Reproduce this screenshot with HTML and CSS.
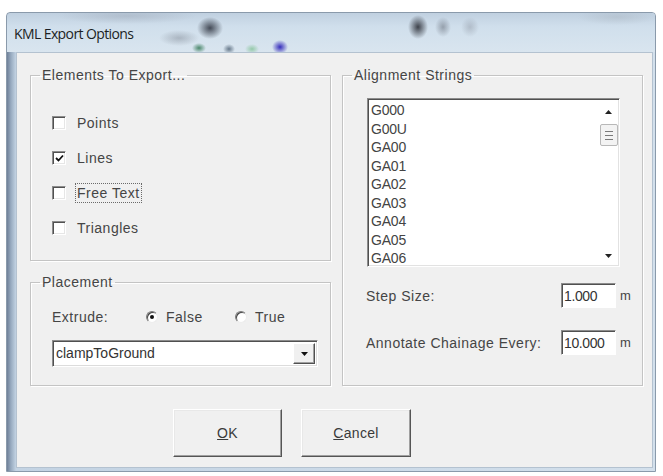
FILE: index.html
```html
<!DOCTYPE html>
<html>
<head>
<meta charset="utf-8">
<title>KML Export Options</title>
<link rel="stylesheet" href="styles.css">
</head>
<body>
<div class="window">
  <div class="titlebar"><span class="title">KML Export Options</span></div>
  <div class="frame">
    <div class="client">
      <div class="groups">
        <div class="col-left">
          <fieldset class="group elements">
            <legend>Elements To Export...</legend>
            <div class="group-body check-list">
              <div class="check"><span class="box"></span><span class="lbl">Points</span></div>
              <div class="check"><span class="box"><svg viewBox="0 0 9 9" width="9" height="9"><path d="M1 4 L3.5 6.5 L8 1.5" fill="none" stroke="#111" stroke-width="1.8"/></svg></span><span class="lbl">Lines</span></div>
              <div class="check"><span class="box"></span><span class="lbl focus">Free Text</span></div>
              <div class="check"><span class="box"></span><span class="lbl">Triangles</span></div>
            </div>
          </fieldset>
          <fieldset class="group placement">
            <legend>Placement</legend>
            <div class="group-body">
              <div class="extrude-row">
                <span class="extrude-label">Extrude:</span>
                <span class="radio-item"><span class="radio on"></span><span class="lbl">False</span></span>
                <span class="radio-item"><span class="radio"></span><span class="lbl">True</span></span>
              </div>
              <div class="combo">
                <span class="combo-text">clampToGround</span>
                <span class="combo-btn"><svg viewBox="0 0 7 4" width="7" height="4"><path d="M0 0 H7 L3.5 4 Z" fill="#111"/></svg></span>
              </div>
            </div>
          </fieldset>
        </div>
        <fieldset class="group alignment">
          <legend>Alignment Strings</legend>
          <div class="group-body">
            <div class="listbox">
              <ul class="items">
                <li>G000</li>
                <li>G00U</li>
                <li>GA00</li>
                <li>GA01</li>
                <li>GA02</li>
                <li>GA03</li>
                <li>GA04</li>
                <li>GA05</li>
                <li>GA06</li>
              </ul>
              <div class="vscroll">
                <svg class="arrow" viewBox="0 0 7 4" width="7" height="4"><path d="M0 4 H7 L3.5 0 Z" fill="#222"/></svg>
                <div class="thumb"><i></i><i></i><i></i></div>
                <div class="track"></div>
                <svg class="arrow" viewBox="0 0 7 4" width="7" height="4"><path d="M0 0 H7 L3.5 4 Z" fill="#222"/></svg>
              </div>
            </div>
            <div class="field-row">
              <span class="field-label">Step Size:</span>
              <span class="field"><span class="input">1.000</span><span class="unit">m</span></span>
            </div>
            <div class="field-row">
              <span class="field-label">Annotate Chainage Every:</span>
              <span class="field"><span class="input">10.000</span><span class="unit">m</span></span>
            </div>
          </div>
        </fieldset>
      </div>
      <div class="buttons">
        <button class="btn ok"><u>O</u>K</button>
        <button class="btn cancel"><u>C</u>ancel</button>
      </div>
    </div>
  </div>
</div>
</body>
</html>
```

FILE: styles.css
```css
* { box-sizing: border-box; }

html, body {
  margin: 0;
  padding: 0;
  background: #ffffff;
}

body {
  width: 663px;
  height: 476px;
  overflow: hidden;
  font-family: "Liberation Sans", Arial, sans-serif;
  font-size: 14px;
  color: #454545;
}

/* Aero-style window frame */
.window {
  margin: 12px 0 0 6px;
  width: 650px;
  height: 460px;
  display: flex;
  flex-direction: column;
  border-radius: 4px 4px 0 0;
  border: 1px solid #8a9aab;
  background:
    linear-gradient(90deg, #6f8098 0px, #98abc0 4px, #c3d3e3 9px, #d3e0ec 100%);
  overflow: hidden;
}

.titlebar {
  height: 39px;
  flex: none;
  padding: 12px 0 0 7px;
  background:
    radial-gradient(ellipse 13px 11px at 203px 15px, rgba(52, 58, 70, 0.9), rgba(52, 58, 70, 0) 100%),
    radial-gradient(ellipse 20px 8px at 172px 25px, rgba(120, 128, 140, 0.45), rgba(120, 128, 140, 0) 100%),
    radial-gradient(ellipse 10px 12px at 411px 14px, rgba(45, 48, 56, 0.9), rgba(45, 48, 56, 0) 100%),
    radial-gradient(ellipse 8px 10px at 436px 14px, rgba(110, 118, 130, 0.6), rgba(110, 118, 130, 0) 100%),
    radial-gradient(ellipse 9px 10px at 463px 14px, rgba(140, 148, 160, 0.45), rgba(140, 148, 160, 0) 100%),
    radial-gradient(ellipse 7px 5px at 192px 35px, rgba(50, 120, 85, 0.85), rgba(50, 120, 85, 0) 100%),
    radial-gradient(ellipse 6px 5px at 222px 36px, rgba(65, 85, 105, 0.75), rgba(65, 85, 105, 0) 100%),
    radial-gradient(ellipse 7px 5px at 245px 36px, rgba(120, 190, 140, 0.7), rgba(120, 190, 140, 0) 100%),
    radial-gradient(ellipse 8px 7px at 273px 34px, rgba(45, 35, 185, 0.95), rgba(45, 35, 185, 0) 100%),
    radial-gradient(ellipse 70px 8px at 120px 3px, rgba(150, 160, 175, 0.4), rgba(150, 160, 175, 0) 100%),
    radial-gradient(ellipse 40px 8px at 610px 4px, rgba(160, 170, 180, 0.35), rgba(160, 170, 180, 0) 100%),
    linear-gradient(180deg, #c0d0e0 0%, #d0dfec 35%, #d9e5ef 100%);
}

.title {
  font-family: "Open Sans", "Noto Sans", sans-serif;
  font-size: 14px;
  letter-spacing: -0.6px;
  line-height: 18px;
  color: #1c1f24;
}

.frame {
  flex: 1;
  padding: 0 2px 3px 9px;
  display: flex;
}

.client {
  flex: 1;
  background: #f0f0f0;
  border: 1px solid #b4c2d0;
  padding: 14px 0 0 13px;
  display: flex;
  flex-direction: column;
}

.groups {
  display: flex;
  gap: 11px;
}

.col-left {
  display: flex;
  flex-direction: column;
  gap: 13px;
}

/* etched group boxes */
.group {
  margin: 0;
  padding: 0;
  width: 301px;
  border: 1px solid #c4c4c4;
  box-shadow: inset 1px 1px 0 #ffffff, 1px 1px 0 #ffffff;
  min-width: 0;
}

.group legend {
  margin-left: 9px;
  padding: 0 2px;
  line-height: 16px;
  font-size: 14px;
  letter-spacing: 0.5px;
  color: #454545;
}

.group-body {
  display: flex;
  flex-direction: column;
  letter-spacing: 0.5px;
}

/* Elements To Export */
.check-list {
  padding: 30px 0 22px 21px;
  gap: 15px;
}

.check {
  display: flex;
  align-items: center;
  height: 20px;
}

.box {
  width: 14px;
  height: 14px;
  flex: none;
  background: #ffffff;
  border-top: 1px solid #8c8c8c;
  border-left: 1px solid #8c8c8c;
  border-right: 1px solid #ffffff;
  border-bottom: 1px solid #ffffff;
  box-shadow: inset 1px 1px 0 #505050, inset -1px -1px 0 #e6e6e6;
  display: flex;
  align-items: center;
  justify-content: center;
  margin-right: 9px;
}

.box svg { display: block; margin: 1px 0 0 1px; }

.lbl {
  line-height: 18px;
  padding: 0 1px;
  border: 1px solid transparent;
}

.lbl.focus {
  border: 1px dotted #6a6a6a;
}

/* Placement */
.placement .group-body {
  padding: 17px 0 18px 21px;
}

.extrude-row {
  display: flex;
  align-items: center;
  height: 20px;
}

.extrude-label {
  width: 94px;
}

.radio-item {
  display: flex;
  align-items: center;
  width: 89px;
}

.radio {
  width: 12px;
  height: 12px;
  flex: none;
  border-radius: 50%;
  background: #ffffff;
  border: 1px solid;
  border-color: #7a7a7a #ececec #ececec #7a7a7a;
  box-shadow: inset 1px 1px 0 #454545;
  margin-right: 6px;
  display: flex;
  align-items: center;
  justify-content: center;
}

.radio.on::after {
  content: "";
  width: 4px;
  height: 4px;
  border-radius: 50%;
  background: #111111;
}

.combo {
  margin-top: 13px;
  width: 266px;
  height: 27px;
  display: flex;
  align-items: stretch;
  background: #ffffff;
  border-top: 1px solid #8c8c8c;
  border-left: 1px solid #8c8c8c;
  border-right: 1px solid #ffffff;
  border-bottom: 1px solid #ffffff;
  box-shadow: inset 1px 1px 0 #505050, inset -1px -1px 0 #dcdcdc;
}

.combo-text {
  flex: 1;
  padding: 4px 0 0 3px;
  color: #333333;
  letter-spacing: 0;
}

.combo-btn {
  width: 22px;
  margin: 2px 2px 2px 0;
  background: #f0f0f0;
  border-top: 1px solid #ffffff;
  border-left: 1px solid #ffffff;
  border-right: 1px solid #505050;
  border-bottom: 1px solid #505050;
  box-shadow: inset -1px -1px 0 #a0a0a0;
  display: flex;
  align-items: center;
  justify-content: center;
}

.combo-btn svg { display: block; }

/* Alignment Strings */
.alignment .group-body {
  padding: 15px 0 30px 24px;
}

.listbox {
  width: 253px;
  height: 169px;
  display: flex;
  background: #ffffff;
  border-top: 1px solid #8c8c8c;
  border-left: 1px solid #8c8c8c;
  border-right: 1px solid #ffffff;
  border-bottom: 1px solid #ffffff;
  box-shadow: inset 1px 1px 0 #505050, inset -1px -1px 0 #e2e2e2;
}

.items {
  list-style: none;
  margin: 0;
  padding: 2px 0 0 3px;
  flex: 1;
}

.items li {
  height: 18.5px;
  line-height: 18.5px;
  color: #444444;
  letter-spacing: -0.2px;
}

.vscroll {
  width: 21px;
  display: flex;
  flex-direction: column;
  align-items: center;
  padding: 11px 0 8px;
}

.vscroll .arrow { display: block; flex: none; }

.thumb {
  margin-top: 10px;
  width: 18px;
  height: 22px;
  background: #f3f3f3;
  border: 1px solid #b8b8b8;
  border-radius: 2px;
  display: flex;
  flex-direction: column;
  align-items: center;
  justify-content: center;
  gap: 3px;
}

.thumb i {
  display: block;
  width: 8px;
  height: 1px;
  background: #7a7a7a;
}

.track { flex: 1; }

.field-row {
  display: flex;
  align-items: center;
  justify-content: space-between;
  width: 263px;
  height: 25px;
  margin-left: -1px;
}

.listbox + .field-row { margin-top: 16px; }
.field-row + .field-row { margin-top: 22px; }

.field {
  display: flex;
  align-items: center;
}

.input {
  width: 55px;
  height: 25px;
  background: #ffffff;
  border-top: 1px solid #8c8c8c;
  border-left: 1px solid #8c8c8c;
  border-right: 1px solid #ffffff;
  border-bottom: 1px solid #ffffff;
  box-shadow: inset 1px 1px 0 #505050;
  padding: 4px 0 0 2px;
  color: #333333;
  letter-spacing: -0.4px;
}

.unit {
  margin-left: 4px;
  width: 9px;
  font-size: 13px;
  letter-spacing: 0;
}

/* dialog buttons */
.buttons {
  display: flex;
  gap: 19px;
  margin-top: 23px;
  padding-left: 143px;
}

.btn {
  height: 48px;
  background: #f0f0f0;
  border-top: 1px solid #ffffff;
  border-left: 1px solid #ffffff;
  border-right: 1px solid #555555;
  border-bottom: 1px solid #555555;
  box-shadow: inset -1px -1px 0 #a0a0a0, inset 1px 1px 0 #e8e8e8;
  font-family: "Liberation Sans", Arial, sans-serif;
  font-size: 14px;
  letter-spacing: 0.3px;
  color: #3a3a3a;
  padding: 0;
}

.btn.ok { width: 109px; }
.btn.cancel { width: 110px; }
```
